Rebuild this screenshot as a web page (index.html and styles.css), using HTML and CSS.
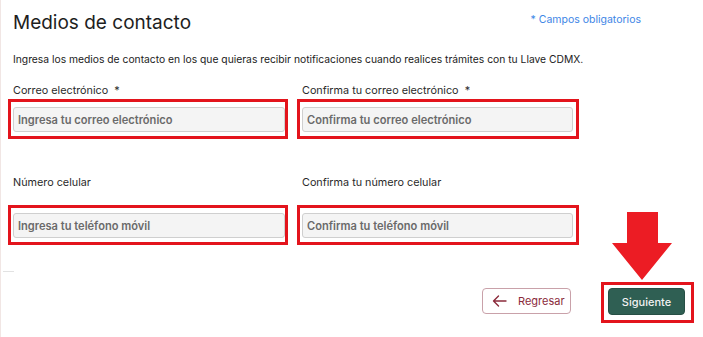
FILE: index.html
```html
<!DOCTYPE html>
<html lang="es">
<head>
<meta charset="utf-8">
<title>Medios de contacto</title>
<link rel="stylesheet" href="styles.css">
</head>
<body>
<div class="page">
  <div class="head">
    <h1 class="title">Medios de contacto</h1>
    <span class="req">* Campos obligatorios</span>
  </div>
  <p class="desc">Ingresa los medios de contacto en los que quieras recibir notificaciones cuando realices trámites con tu Llave CDMX.</p>

  <div class="grid row1">
    <div class="field">
      <label class="label">Correo electrónico &nbsp;*</label>
      <div class="mark mark-a"><input class="input" type="text" placeholder="Ingresa tu correo electrónico"></div>
    </div>
    <div class="field">
      <label class="label">Confirma tu correo electrónico &nbsp;*</label>
      <div class="mark mark-b"><input class="input" type="text" placeholder="Confirma tu correo electrónico"></div>
    </div>
  </div>

  <div class="grid row2">
    <div class="field">
      <label class="label">Número celular</label>
      <div class="mark mark-a"><input class="input" type="text" placeholder="Ingresa tu teléfono móvil"></div>
    </div>
    <div class="field">
      <label class="label">Confirma tu número celular</label>
      <div class="mark mark-b"><input class="input" type="text" placeholder="Confirma tu teléfono móvil"></div>
    </div>
  </div>

  <div class="rule"></div>

  <div class="actions">
    <button class="btn-back" type="button">
      <svg class="back-icon" width="15" height="12" viewBox="0 0 15 12"><path d="M14 6H1.5M6.5 1L1.5 6l5 5" fill="none" stroke="#8b2b3b" stroke-width="1.4" stroke-linecap="round" stroke-linejoin="round"/></svg>
      <span>Regresar</span>
    </button>
    <div class="mark-next">
      <button class="btn-next" type="button">Siguiente</button>
      <svg class="arrow" width="62" height="70" viewBox="0 0 62 70"><path d="M16 0H47V31H61L31 68L1 31H16Z" fill="#ec1c24"/></svg>
    </div>
  </div>
</div>
</body>
</html>
```
FILE: styles.css
```css
html, body {
  margin: 0;
  padding: 0;
  background: #fff;
}
body {
  font-family: "Inter", "Noto Sans", "Liberation Sans", sans-serif;
  color: #222;
  width: 703px;
  height: 337px;
  overflow: hidden;
}
.page {
  position: relative;
  height: 337px;
  border-left: 1px solid #f1e6e4;
  box-sizing: border-box;
}
.head {
  display: flex;
  justify-content: space-between;
  align-items: flex-start;
  padding: 10px 62px 0 12px;
}
.title {
  margin: 0;
  font-size: 19px;
  font-weight: 400;
  line-height: 26px;
  color: #1e1e1e;
}
.req {
  font-size: 10.5px;
  color: #3e86e6;
  margin-top: 3px;
}
.desc {
  margin: 16px 0 0 12px;
  font-size: 10.3px;
  line-height: 14px;
  color: #222;
}
.grid {
  display: grid;
  grid-template-columns: 280px 282px;
  column-gap: 9px;
  padding-left: 7px;
}
.row1 { margin-top: 18px; }
.row2 { margin-top: 37px; }
.field {
  display: flex;
  flex-direction: column;
}
.label {
  font-size: 10.8px;
  line-height: 14px;
  color: #2a2a2a;
  padding-left: 5px;
}
.row1 .label { margin-bottom: 1px; }
.row2 .label { margin-bottom: 15px; }
.mark {
  border: 3px solid #e3141c;
  padding: 5px 0 4px 2px;
}
.mark-b { padding-right: 3px; }
.input {
  display: block;
  box-sizing: border-box;
  width: 100%;
  height: 25px;
  margin: 0;
  background: #f4f4f4;
  border: 1px solid #cfcfcf;
  border-radius: 3px;
  padding: 0 4px;
  font-family: "Inter", "Noto Sans", "Liberation Sans", sans-serif;
  font-size: 11.1px;
  font-weight: 600;
  color: #666;
}
.input::placeholder {
  color: #6a6a6a;
  opacity: 1;
}
.rule {
  width: 11px;
  height: 1px;
  background: #e2e2e2;
  margin: 26px 0 0 2px;
}
.actions {
  display: flex;
  justify-content: flex-end;
  align-items: flex-start;
  gap: 30px;
  padding-right: 9px;
  margin-top: 10px;
}
.btn-back {
  margin-top: 6px;
  display: flex;
  align-items: center;
  gap: 11px;
  width: 89px;
  height: 26px;
  padding: 0 0 0 9px;
  background: #fff;
  border: 1px solid #c9a1a9;
  border-radius: 4px;
  font-family: "Inter", "Noto Sans", "Liberation Sans", sans-serif;
  font-size: 11px;
  color: #8b2b3b;
  box-sizing: border-box;
}
.mark-next {
  position: relative;
  border: 3px solid #e3141c;
  padding: 3px 6px 5px 4px;
}
.btn-next {
  display: block;
  width: 77px;
  height: 27px;
  background: #2f5f53;
  border: 1px solid #274f45;
  border-radius: 4px;
  color: #f2f2f2;
  font-family: "Inter", "Noto Sans", "Liberation Sans", sans-serif;
  font-size: 11px;
  font-weight: 500;
  box-sizing: border-box;
}
.arrow {
  position: absolute;
  left: 7px;
  top: -73px;
}
```
